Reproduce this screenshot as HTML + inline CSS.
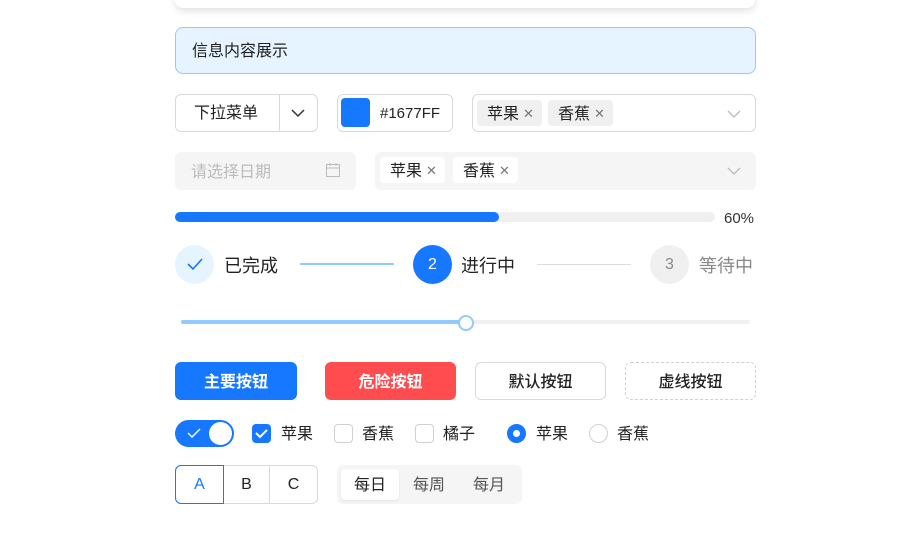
<!DOCTYPE html><html><head><meta charset="utf-8"><style>
*{box-sizing:border-box;margin:0;padding:0}
body{width:903px;height:545px;overflow:hidden;background:#fff;font-family:"Liberation Sans","Noto Sans CJK SC",sans-serif;font-size:16px;color:#222;position:relative;line-height:1}
.a{position:absolute}
.f{display:flex;align-items:center;padding-top:3px}
.tag{position:absolute;top:5px;height:26px;background:#f0f0f0;border-radius:4px;padding:3px 8px 0 10px;font-size:16px;display:flex;align-items:center;gap:4px}
.x{color:#777;font-size:13px;margin-top:-2px}
.btn{position:absolute;top:362px;height:38px;border-radius:6px;display:flex;align-items:center;justify-content:center;font-size:16px;font-weight:600;padding-top:3px}
.cb{position:absolute;top:424px;width:19px;height:19px;border:1px solid #d0d0d0;border-radius:4px;background:#fff}
.lb{position:absolute;top:427px;font-size:16px}
</style></head><body>
<div class="a" style="left:175px;top:-20px;width:580px;height:28px;background:#fff;border-radius:8px;box-shadow:0 3px 8px rgba(0,0,0,.12)"></div>
<div class="a f" style="left:175px;top:27px;width:581px;height:47px;background:#e6f4ff;border:1px solid #91caff;border-radius:8px;padding-left:16px">信息内容展示</div>

<div class="a" style="left:175px;top:94px;width:143px;height:38px;border:1px solid #d9d9d9;border-radius:6px"></div>
<div class="a" style="left:194px;top:106px">下拉菜单</div>
<div class="a" style="left:279px;top:95px;width:1px;height:36px;background:#d9d9d9"></div>
<svg class="a" style="left:291px;top:108px" width="14" height="10"><path d="M1 2l6 6 6-6" fill="none" stroke="#333" stroke-width="1.5"/></svg>

<div class="a" style="left:337px;top:94px;width:116px;height:38px;border:1px solid #d9d9d9;border-radius:6px"></div>
<div class="a" style="left:341px;top:98px;width:29px;height:29px;background:#1677ff;border-radius:4px"></div>
<div class="a" style="left:380px;top:106px;font-size:15px">#1677FF</div>

<div class="a" style="left:472px;top:94px;width:284px;height:38px;border:1px solid #d9d9d9;border-radius:6px">
<div class="tag" style="left:4px">苹果<span class="x">✕</span></div>
<div class="tag" style="left:75px">香蕉<span class="x">✕</span></div>
<svg class="a" style="left:254px;top:14px" width="14" height="10"><path d="M1 2l6 6 6-6" fill="none" stroke="#bbb" stroke-width="1.3"/></svg></div>

<div class="a f" style="left:175px;top:152px;width:181px;height:38px;background:#f5f5f5;border-radius:6px;padding-left:16px;color:#bbb">请选择日期</div>
<svg class="a" style="left:325px;top:162px" width="16" height="16"><rect x="1.5" y="2.5" width="13" height="12" fill="none" stroke="#bbb"/><path d="M1.5 6h13M5 1v3M11 1v3" stroke="#bbb"/></svg>
<div class="a" style="left:375px;top:152px;width:381px;height:38px;background:#f5f5f5;border-radius:6px">
<div class="tag" style="left:5px;background:#fff">苹果<span class="x">✕</span></div>
<div class="tag" style="left:78px;background:#fff">香蕉<span class="x">✕</span></div>
<svg class="a" style="left:352px;top:14px" width="14" height="10"><path d="M1 2l6 6 6-6" fill="none" stroke="#bbb" stroke-width="1.3"/></svg></div>

<div class="a" style="left:175px;top:212px;width:540px;height:10px;background:#f0f0f0;border-radius:5px"></div>
<div class="a" style="left:175px;top:212px;width:324px;height:10px;background:#1677ff;border-radius:5px"></div>
<div class="a" style="left:724px;top:211px;font-size:15px;color:#333">60%</div>

<div class="a" style="left:175px;top:245px;width:39px;height:39px;border-radius:50%;background:#e6f4ff"></div>
<svg class="a" style="left:186px;top:257px" width="18" height="14"><path d="M2 7l5 5 9-10" fill="none" stroke="#1677ff" stroke-width="1.6"/></svg>
<div class="a" style="left:224px;top:257px;font-size:18px">已完成</div>
<div class="a" style="left:300px;top:263px;width:94px;height:2px;background:#91caff"></div>
<div class="a f" style="left:413px;top:245px;width:39px;height:39px;border-radius:50%;background:#1677ff;color:#fff;justify-content:center;padding-top:1px">2</div>
<div class="a" style="left:461px;top:257px;font-size:18px">进行中</div>
<div class="a" style="left:537px;top:264px;width:94px;height:1px;background:#ddd"></div>
<div class="a f" style="left:650px;top:245px;width:39px;height:39px;border-radius:50%;background:#f0f0f0;color:#888;justify-content:center;padding-top:1px">3</div>
<div class="a" style="left:699px;top:257px;font-size:18px;color:#888">等待中</div>

<div class="a" style="left:181px;top:320px;width:569px;height:4px;background:#f0f0f0;border-radius:2px"></div>
<div class="a" style="left:181px;top:320px;width:285px;height:4px;background:#91caff;border-radius:2px"></div>
<div class="a" style="left:458px;top:315px;width:16px;height:16px;border-radius:50%;background:#fff;border:2px solid #91caff"></div>

<div class="btn" style="left:175px;width:122px;background:#1677ff;color:#fff">主要按钮</div>
<div class="btn" style="left:325px;width:131px;background:#ff4d4f;color:#fff">危险按钮</div>
<div class="btn" style="left:475px;width:131px;border:1px solid #d9d9d9;font-weight:500">默认按钮</div>
<div class="btn" style="left:625px;width:131px;border:1px dashed #d0d0d0;font-weight:500">虚线按钮</div>

<div class="a" style="left:175px;top:420px;width:59px;height:27px;border-radius:14px;background:#1677ff"></div>
<svg class="a" style="left:187px;top:427px" width="14" height="12"><path d="M1 6l4 4 8-8" fill="none" stroke="#fff" stroke-width="1.4"/></svg>
<div class="a" style="left:209px;top:422px;width:23px;height:23px;border-radius:50%;background:#fff"></div>
<div class="cb" style="left:252px;background:#1677ff;border-color:#1677ff"></div>
<svg class="a" style="left:255px;top:428px" width="13" height="11"><path d="M1 5l4 4 7-7" fill="none" stroke="#fff" stroke-width="2"/></svg>
<div class="lb" style="left:281px">苹果</div>
<div class="cb" style="left:334px"></div><div class="lb" style="left:362px">香蕉</div>
<div class="cb" style="left:415px"></div><div class="lb" style="left:443px">橘子</div>
<div class="a" style="left:507px;top:424px;width:19px;height:19px;border-radius:50%;border:6px solid #1677ff;background:#fff"></div>
<div class="lb" style="left:536px">苹果</div>
<div class="a" style="left:589px;top:424px;width:19px;height:19px;border-radius:50%;border:1px solid #d0d0d0"></div>
<div class="lb" style="left:617px">香蕉</div>

<div class="a" style="left:175px;top:465px;width:143px;height:39px;border:1px solid #d9d9d9;border-radius:6px"></div>
<div class="a f" style="left:175px;top:465px;width:49px;height:39px;border:1px solid #1677ff;border-radius:6px 0 0 6px;color:#1677ff;justify-content:center;padding-top:1px">A</div>
<div class="a f" style="left:224px;top:465px;width:45px;height:39px;justify-content:center;padding-top:1px">B</div>
<div class="a" style="left:269px;top:466px;width:1px;height:37px;background:#d9d9d9"></div>
<div class="a f" style="left:270px;top:465px;width:47px;height:39px;justify-content:center;padding-top:1px">C</div>

<div class="a" style="left:337px;top:465px;width:185px;height:39px;background:#f5f5f5;border-radius:6px"></div>
<div class="a f" style="left:341px;top:469px;width:58px;height:31px;background:#fff;border-radius:4px;justify-content:center;box-shadow:0 1px 2px rgba(0,0,0,.08)">每日</div>
<div class="a" style="left:413px;top:478px;color:#555">每周</div>
<div class="a" style="left:473px;top:478px;color:#555">每月</div>
</body></html>
